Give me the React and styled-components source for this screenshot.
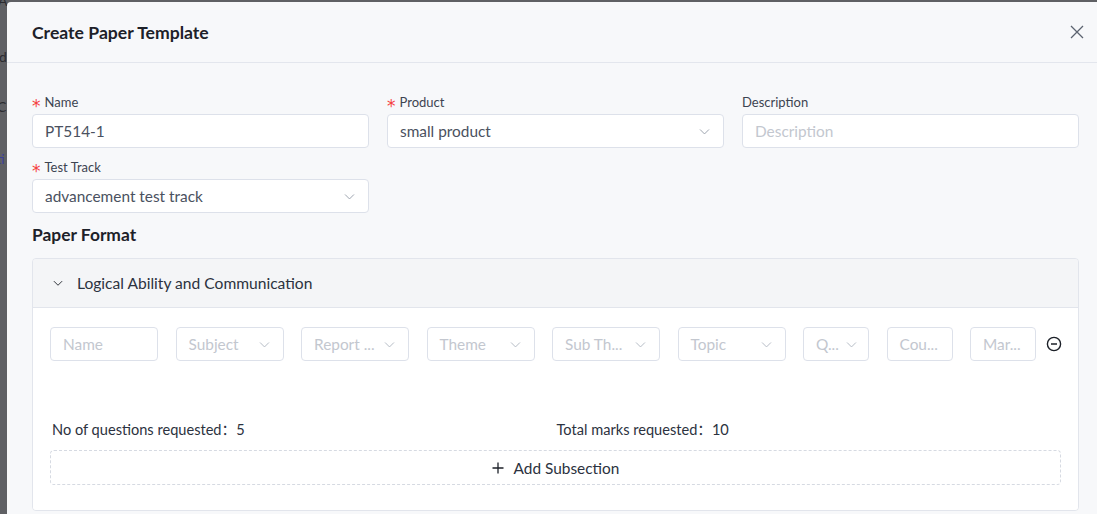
import React from "react";
import styled, { createGlobalStyle } from "styled-components";

const Global = createGlobalStyle`
  html, body { margin: 0; padding: 0; }
  body {
    background: #5f6064;
    font-family: Lato, "Noto Sans CJK SC", "Liberation Sans", sans-serif;
    overflow: hidden;
  }
  * { box-sizing: border-box; }
`;

const Page = styled.div`
  position: relative;
  width: 1097px;
  height: 514px;
  overflow: hidden;
`;

const Backdrop = styled.div`
  position: absolute;
  left: 0;
  top: 0;
  width: 7px;
  height: 514px;
  overflow: hidden;
  font-size: 14px;
  line-height: 1;
`;

const BackText = styled.span`
  position: absolute;
  left: ${(p) => p.$x}px;
  top: ${(p) => p.$y}px;
  color: ${(p) => p.$c || "#2b2b30"};
`;

const Modal = styled.div`
  position: absolute;
  left: 7px;
  top: 2px;
  width: 1100px;
  height: 520px;
  background: #f7f8fa;
  border-radius: 4px 0 0 0;
  display: flex;
  flex-direction: column;
`;

const Header = styled.div`
  height: 61px;
  flex: none;
  display: flex;
  align-items: center;
  justify-content: space-between;
  padding: 0 22px 0 25px;
  border-bottom: 1px solid #e3e6ed;
`;

const Title = styled.h2`
  margin: 0;
  font-size: 17.6px;
  font-weight: 700;
  color: #1d2129;
`;

const CloseBtn = styled.button`
  border: none;
  background: none;
  padding: 0;
  width: 16px;
  height: 16px;
  display: flex;
  align-items: center;
  justify-content: center;
  cursor: pointer;
`;

const Body = styled.div`
  padding: 29px 18px 0 25px;
  display: flex;
  flex-direction: column;
`;

const FormGrid = styled.div`
  display: grid;
  grid-template-columns: repeat(3, 337px);
  column-gap: 18px;
  row-gap: 9px;
`;

const Field = styled.div`
  display: flex;
  flex-direction: column;
`;

const Label = styled.label`
  height: 20px;
  line-height: 20px;
  margin-bottom: 2px;
  font-size: 13px;
  color: #3d4451;
  display: flex;
  align-items: center;
`;

const Star = styled.span`
  color: #f53f3f;
  margin-right: 4px;
  font-size: 17px;
  line-height: 1;
  position: relative;
  top: 4px;
  font-family: "DejaVu Sans", sans-serif;
`;

const InputBox = styled.div`
  height: 34px;
  border: 1px solid #dde1ea;
  border-radius: 4px;
  background: #fff;
  display: flex;
  align-items: center;
  justify-content: space-between;
  padding: 0 ${(p) => p.$pr ?? 12}px 0 12px;
  font-size: 15.4px;
  color: ${(p) => (p.$placeholder ? "#c3c7cf" : "#4a5160")};
  white-space: nowrap;
  overflow: hidden;
  width: ${(p) => (p.$w ? `${p.$w}px` : "auto")};
  flex: none;
`;

const SectionTitle = styled.h3`
  margin: 10px 0 11px 0;
  height: 24px;
  line-height: 24px;
  font-size: 17.4px;
  font-weight: 700;
  color: #1d2129;
`;

const Accordion = styled.div`
  width: 1047px;
  border: 1px solid #e2e5ec;
  border-radius: 4px;
  overflow: hidden;
`;

const AccHeader = styled.div`
  height: 49px;
  background: #f4f5f7;
  display: flex;
  align-items: center;
  padding-left: 19px;
  gap: 13px;
  font-size: 15.6px;
  color: #2c3240;
  border-bottom: 1px solid #e2e5ec;
`;

const AccContent = styled.div`
  background: #fff;
  padding: 19px 17px 23px 17px;
  display: flex;
  flex-direction: column;
  height: 202px;
`;

const SubRow = styled.div`
  display: flex;
  align-items: center;
  gap: 17.5px;
`;

const MinusBtn = styled.span`
  display: flex;
  width: 16px;
  height: 16px;
  margin-left: -8px;
`;

const Summary = styled.div`
  margin-top: 59px;
  display: grid;
  grid-template-columns: 1fr 1fr;
  height: 20px;
  line-height: 20px;
  font-size: 14.6px;
  color: #2c3240;
  padding-left: 2px;
`;

const AddBtn = styled.div`
  margin-top: 10px;
  height: 35px;
  border: 1px dashed #d6dae2;
  border-radius: 4px;
  display: flex;
  align-items: center;
  justify-content: center;
  gap: 10px;
  font-size: 15.4px;
  color: #2c3240;
  width: 1011px;
`;

const Chevron = ({ color = "#9aa1ad", size = 13 }) => (
  <svg width={size} height={size} viewBox="0 0 16 16" fill="none">
    <path d="M2.5 5.5 L8 11 L13.5 5.5" stroke={color} strokeWidth="1.2" />
  </svg>
);

const SubSelect = ({ w, text, pr = 12 }) => (
  <InputBox $w={w} $placeholder $pr={pr}>
    <span>{text}</span>
    <Chevron color="#b4bac4" />
  </InputBox>
);

export default function App() {
  return (
    <>
      <Global />
      <Page>
        <Backdrop>
          <BackText $x={-2} $y={-6}>A</BackText>
          <BackText $x={-1} $y={50}>d</BackText>
          <BackText $x={-3} $y={100}>C</BackText>
          <BackText $x={-4} $y={152} $c="#3b3f9a">ti</BackText>
        </Backdrop>
        <Modal>
          <Header>
            <Title>Create Paper Template</Title>
            <CloseBtn aria-label="close">
              <svg width="14" height="14" viewBox="0 0 14 14" fill="none">
                <path d="M1 1 L13 13 M13 1 L1 13" stroke="#5c6370" strokeWidth="1.3" />
              </svg>
            </CloseBtn>
          </Header>
          <Body>
            <FormGrid>
              <Field>
                <Label><Star>*</Star>Name</Label>
                <InputBox>PT514-1</InputBox>
              </Field>
              <Field>
                <Label><Star>*</Star>Product</Label>
                <InputBox>
                  <span>small product</span>
                  <Chevron />
                </InputBox>
              </Field>
              <Field>
                <Label>Description</Label>
                <InputBox $placeholder>Description</InputBox>
              </Field>
              <Field>
                <Label><Star>*</Star>Test Track</Label>
                <InputBox>
                  <span>advancement test track</span>
                  <Chevron />
                </InputBox>
              </Field>
            </FormGrid>
            <SectionTitle>Paper Format</SectionTitle>
            <Accordion>
              <AccHeader>
                <Chevron color="#1d2129" size={12} />
                <span>Logical Ability and Communication</span>
              </AccHeader>
              <AccContent>
                <SubRow>
                  <InputBox $w={108} $placeholder>Name</InputBox>
                  <SubSelect w={108} text="Subject" />
                  <SubSelect w={108} text="Report ..." />
                  <SubSelect w={108} text="Theme" />
                  <SubSelect w={108} text="Sub Th..." />
                  <SubSelect w={108} text="Topic" />
                  <SubSelect w={66} text="Q..." pr={10} />
                  <InputBox $w={66} $placeholder>Cou...</InputBox>
                  <InputBox $w={66} $placeholder>Mar...</InputBox>
                  <MinusBtn>
                    <svg width="16" height="16" viewBox="0 0 16 16" fill="none">
                      <circle cx="8" cy="8" r="6.6" stroke="#1d2129" strokeWidth="1.4" />
                      <path d="M5 8 H11" stroke="#1d2129" strokeWidth="1.4" />
                    </svg>
                  </MinusBtn>
                </SubRow>
                <Summary>
                  <span>No of questions requested：5</span>
                  <span>Total marks requested：10</span>
                </Summary>
                <AddBtn>
                  <svg width="12" height="12" viewBox="0 0 12 12" fill="none">
                    <path d="M6 0.5 V11.5 M0.5 6 H11.5" stroke="#1d2129" strokeWidth="1.3" />
                  </svg>
                  <span>Add Subsection</span>
                </AddBtn>
              </AccContent>
            </Accordion>
          </Body>
        </Modal>
      </Page>
    </>
  );
}
